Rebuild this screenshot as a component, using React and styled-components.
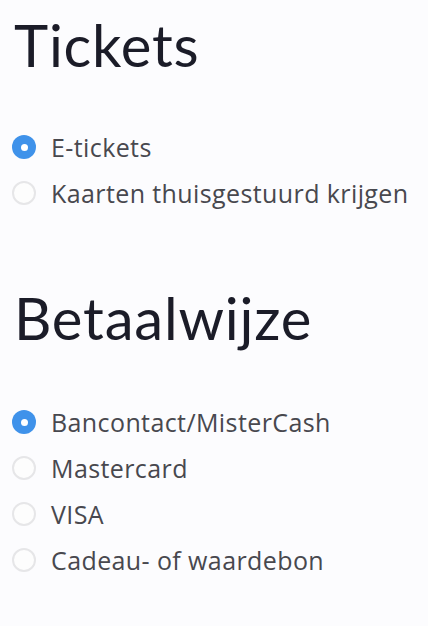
import React, { useState } from 'react';
import styled, { createGlobalStyle } from 'styled-components';

const Global = createGlobalStyle`
  html, body {
    margin: 0;
    padding: 0;
    background: #fcfcfe;
  }
  body {
    font-family: Lato, "Noto Sans", sans-serif;
  }
`;

const Page = styled.div`
  width: 428px;
  height: 626px;
  padding: 0 12px;
  box-sizing: border-box;
  overflow: hidden;
`;

const Section = styled.section`
  display: flex;
  flex-direction: column;
  margin-bottom: ${props => props.gap || 0}px;
`;

const Heading = styled.h2`
  margin: 0 0 0 2px;
  font-size: 58px;
  font-weight: 400;
  line-height: 90px;
  color: #1b1c28;
  letter-spacing: 0.8px;
`;

const Options = styled.div`
  display: flex;
  flex-direction: column;
  margin-top: ${props => props.offset}px;
`;

const Option = styled.label`
  display: flex;
  align-items: center;
  gap: 15px;
  height: 46px;
  cursor: pointer;
`;

const Radio = styled.span`
  width: 24px;
  height: 24px;
  box-sizing: border-box;
  border-radius: 50%;
  flex-shrink: 0;
  display: flex;
  align-items: center;
  justify-content: center;
  background: ${props => (props.checked ? '#3f92ea' : '#fdfdfd')};
  border: ${props => (props.checked ? 'none' : '2px solid #e6e6e8')};

  &::after {
    content: '';
    width: 7px;
    height: 7px;
    border-radius: 50%;
    background: #ffffff;
    display: ${props => (props.checked ? 'block' : 'none')};
  }
`;

const Label = styled.span`
  font-family: "Open Sans", Lato, sans-serif;
  font-size: 25px;
  color: #48484e;
  letter-spacing: 0.4px;
`;

const RadioGroup = ({ items, value, onChange, offset }) => (
  <Options offset={offset}>
    {items.map(item => (
      <Option key={item} onClick={() => onChange(item)}>
        <Radio checked={value === item} />
        <Label>{item}</Label>
      </Option>
    ))}
  </Options>
);

const tickets = ['E-tickets', 'Kaarten thuisgestuurd krijgen'];
const payments = ['Bancontact/MisterCash', 'Mastercard', 'VISA', 'Cadeau- of waardebon'];

export default function App() {
  const [ticket, setTicket] = useState(tickets[0]);
  const [payment, setPayment] = useState(payments[0]);

  return (
    <Page>
      <Global />
      <Section gap={57}>
        <Heading>Tickets</Heading>
        <RadioGroup items={tickets} value={ticket} onChange={setTicket} offset={34} />
      </Section>
      <Section>
        <Heading>Betaalwijze</Heading>
        <RadioGroup items={payments} value={payment} onChange={setPayment} offset={36} />
      </Section>
    </Page>
  );
}
